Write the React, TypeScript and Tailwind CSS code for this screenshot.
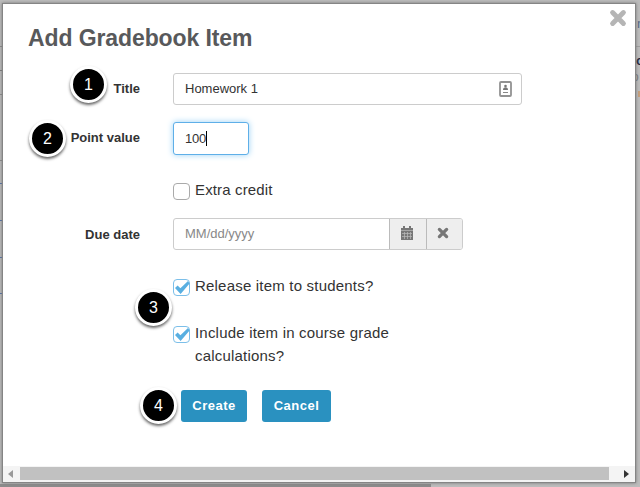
import React from "react";

const field = "rounded-[3px] border border-[#ccc] bg-white text-[13px] text-[#333]";

function Badge({ n, place }: { n: number; place: string }) {
  return (
    <span
      className={`absolute flex h-[37px] w-[37px] items-center justify-center rounded-full border-[3px] border-white bg-black text-[16px] leading-none text-white shadow-[0_2px_3px_0px_rgba(0,0,0,0.6)] ${place}`}
    >
      {n}
    </span>
  );
}

function Label({ children }: { children?: React.ReactNode }) {
  return <div className="w-[137px] shrink-0 text-right text-[13px] font-bold leading-[34px] text-[#333]">{children}</div>;
}

function Check({ checked = false }: { checked?: boolean }) {
  return (
    <span
      className={`mt-[3px] h-[17px] w-[17px] shrink-0 rounded-[4px] border bg-white ${checked ? "border-[#7cbfe9]" : "border-[#aaa]"}`}
    >
      {checked && (
        <svg className="block h-[15px] w-[16px]" viewBox="0 0 16 15">
          <path d="M1 8L3.6 5.6L6.4 8.3L14 1L15.6 3.4L6.6 14Z" fill="#59afe1" />
        </svg>
      )}
    </span>
  );
}

function Cross({ className }: { className: string }) {
  return (
    <svg className={className} viewBox="0 0 16 16">
      <path d="M3.2 3.2L12.8 12.8M12.8 3.2L3.2 12.8" stroke="currentColor" strokeWidth="4.4" strokeLinecap="round" />
    </svg>
  );
}

const button =
  "flex h-[32px] items-center justify-center rounded-[3px] bg-[#2a91c0] pb-[1px] text-[13px] font-bold tracking-[0.5px] text-white";

export default function App() {
  return (
    <div className="relative h-[487px] w-[640px] overflow-hidden bg-[#bcbcbc] pl-[3px] pt-[4px] font-['Liberation_Sans',Arial,sans-serif]">
      <div className="absolute right-0 top-0 h-full w-[4px] overflow-hidden text-[13px] leading-none">
        <div className="absolute left-[1px] top-[17px] text-[#536887]">n</div>
        <div className="absolute left-0 top-[46px] h-px w-full bg-[#a0a0a0]" />
        <div className="absolute left-0 top-[54px] font-bold text-[#24243a]">c</div>
        <div className="absolute left-[-4px] top-[71px] text-[12px] text-[#777]">o</div>
        <div className="absolute left-[2px] top-[91px] h-[6px] w-[2px] bg-[#c7a07c]" />
      </div>
      <div className="absolute left-0 top-0 h-full w-[3px]">
        <div className="absolute top-[46px] h-px w-full bg-[#888]" />
        <div className="absolute top-[70px] h-px w-full bg-[#777]" />
        <div className="absolute top-[94px] h-px w-full bg-[#888]" />
        <div className="absolute top-[160px] h-px w-full bg-[#888]" />
        <div className="absolute top-[183px] h-px w-[2px] bg-[#4f6ea7]" />
        <div className="absolute top-[220px] h-px w-[2px] bg-[#4f6ea7]" />
        <div className="absolute top-[257px] h-px w-[2px] bg-[#4f6ea7]" />
        <div className="absolute top-[293px] h-px w-[2px] bg-[#4f6ea7]" />
      </div>
      <div className="absolute bottom-0 left-0 h-[3px] w-[431px] bg-[#8c8c8c]" />

      <main className="relative flex h-[478px] w-[632px] flex-col bg-white shadow-[0_0_0_1px_#858585,0_0_3px_1px_#777]">
        <header className="flex h-[68px] shrink-0 justify-between">
          <h1 className="ml-[25px] mt-[19px] text-[23px] font-bold leading-[30px] tracking-[-0.1px] text-[#58595b]">
            Add Gradebook Item
          </h1>
          <Cross className="mr-[8px] mt-[5px] h-[18px] w-[18px] text-[#b5b5b5]" />
        </header>

        <div className="flex h-[49px] shrink-0">
          <Label>Title</Label>
          <div className={`ml-[33px] mt-px flex h-[32px] w-[349px] items-center justify-between pl-[11px] pr-[9px] ${field}`}>
            <span>Homework 1</span>
            <svg className="h-[16px] w-[13px]" viewBox="0 0 13 16">
              <rect x="1" y="1" width="11" height="14" rx="1" fill="#fff" stroke="#929292" strokeWidth="1.8" />
              <circle cx="6.5" cy="5" r="1.3" fill="#777" />
              <path d="M4 9Q4 6.3 6.5 6.3Q9 6.3 9 9Z" fill="#777" />
              <path d="M4 11.5H9" stroke="#888" />
            </svg>
          </div>
        </div>

        <div className="flex h-[59px] shrink-0">
          <Label>Point value</Label>
          <div className="ml-[33px] mt-px flex h-[33px] w-[76px] items-center rounded-[3px] border border-[#5eafe8] bg-white pl-[11px] text-[13px] tracking-[-0.2px] text-[#333] shadow-[0_0_6px_#9bd2f5]">
            100
            <span className="h-[15px] w-px bg-black" />
          </div>
        </div>

        <div className="ml-[170px] flex h-[38px] shrink-0 text-[15px] leading-[20px] tracking-[0.15px] text-[#333]">
          <Check />
          <span className="ml-[5px]">Extra credit</span>
        </div>

        <div className="flex h-[58px] shrink-0">
          <Label>Due date</Label>
          <div className={`ml-[33px] flex h-[32px] w-[290px] overflow-hidden ${field}`}>
            <span className="flex flex-1 items-center pl-[11px] text-[#888]">MM/dd/yyyy</span>
            <span className="flex w-[37px] items-center justify-center border-l border-[#bbb] bg-[#eee] pb-[3px] pr-[2px]">
              <svg className="h-[14px] w-[14px]" viewBox="0 0 14 14">
                <path d="M1 2H13V14H1ZM3 0H5V3H3ZM9 0H11V3H9Z" fill="#777" />
                <path d="M1 4.5H13M2 7.5H12M2 10.5H12M4.5 6V13M7.5 6V13M10.5 6V13" stroke="#bbb" strokeWidth=".7" />
              </svg>
            </span>
            <span className="flex w-[36px] items-center justify-center border-l border-[#bbb] bg-[#eee] pb-[3px]">
              <Cross className="mr-[3px] h-[12px] w-[12px] text-[#777]" />
            </span>
          </div>
        </div>

        <div className="ml-[170px] flex h-[46px] shrink-0 text-[15px] leading-[20px] tracking-[0.2px] text-[#333]">
          <Check checked />
          <span className="ml-[5px]">Release item to students?</span>
        </div>
        <div className="ml-[170px] flex h-[68px] shrink-0 pt-px text-[15px] tracking-[0.2px] text-[#333]">
          <Check checked />
          <span className="-mt-[2px] ml-[5px] leading-[23px]">
            Include item in course grade
            <br />
            calculations?
          </span>
        </div>

        <div className="ml-[178px] flex gap-[15px]">
          <button className={`${button} w-[66px]`}>Create</button>
          <button className={`${button} w-[69px]`}>Cancel</button>
        </div>

        <div className="mt-auto flex h-[16px] items-center bg-[#f4f4f4] pb-[2px] pt-px">
          <svg className="ml-[5px] h-[8px] w-[5px]" viewBox="0 0 5 8">
            <path d="M5 0V8L0 4Z" fill="#999" />
          </svg>
          <div className="ml-[7px] h-[13px] w-[589px] bg-[#c1c1c1]" />
          <svg className="ml-auto mr-[6px] h-[8px] w-[5px]" viewBox="0 0 5 8">
            <path d="M0 0V8L5 4Z" fill="#333" />
          </svg>
        </div>
      </main>

      <Badge n={1} place="left-[70px] top-[66px]" />
      <Badge n={2} place="left-[29px] top-[120px]" />
      <Badge n={3} place="left-[135px] top-[289px]" />
      <Badge n={4} place="left-[140px] top-[387px]" />
    </div>
  );
}
